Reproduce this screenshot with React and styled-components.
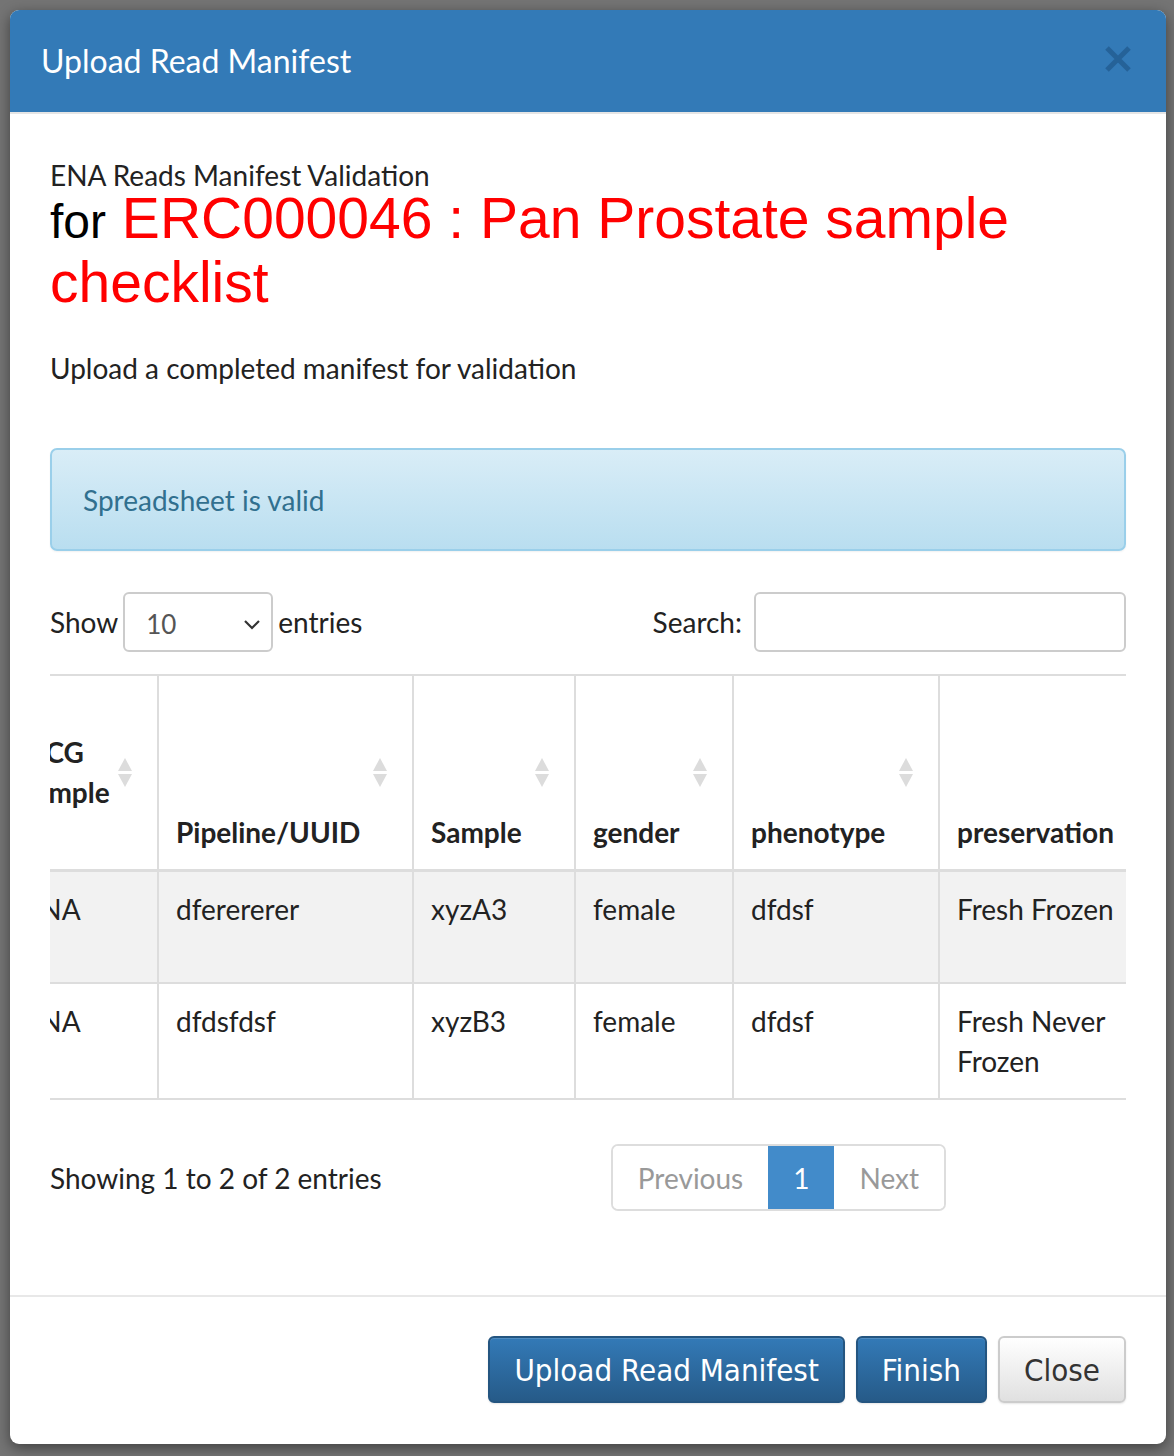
import React from "react";
import styled, { createGlobalStyle } from "styled-components";

const GlobalStyle = createGlobalStyle`
  html, body {
    margin: 0;
    padding: 0;
    background: #747474;
  }
  * {
    box-sizing: border-box;
  }
`;

const Backdrop = styled.div`
  min-height: 1456px;
  padding: 10px 8px 12px 10px;
  font-family: Lato, "Open Sans", sans-serif;
  color: #222;
`;

const Modal = styled.div`
  width: 1156px;
  background: #fff;
  border-radius: 9px;
  overflow: hidden;
  box-shadow: 0 4px 14px rgba(0, 0, 0, 0.45);
`;

const Header = styled.div`
  height: 104px;
  padding: 0 31px;
  background: #337ab7;
  border-bottom: 2px solid #e5e5e5;
  display: flex;
  align-items: center;
  justify-content: space-between;
`;

const Title = styled.h4`
  margin: 0;
  font-size: 32px;
  font-weight: 400;
  color: #fff;
  padding-bottom: 2px;
`;

const CloseX = styled.button`
  border: 0;
  background: none;
  padding: 0;
  width: 28px;
  height: 28px;
  margin-right: 3px;
  margin-bottom: 4px;
  opacity: 0.55;
  display: flex;
`;

const Body = styled.div`
  padding: 44px 40px 0 40px;
  height: 1183px;
  border-bottom: 2px solid #e8e8e8;
`;

const Caption = styled.div`
  font-size: 28px;
  line-height: 34px;
`;

const BigLine = styled.div`
  font-family: "Liberation Sans", Arial, sans-serif;
  font-size: 57px;
  line-height: 64px;
  color: #000;
  margin-top: -6px;
`;

const For = styled.span`
  font-size: 48px;
  line-height: 0;
`;

const Red = styled.span`
  color: #ff0000;
`;

const Lead = styled.p`
  font-size: 28px;
  line-height: 40px;
  margin: 34px 0 0;
`;

const Alert = styled.div`
  margin-top: 60px;
  height: 103px;
  padding: 0 31px;
  display: flex;
  align-items: center;
  font-size: 28px;
  color: #31708f;
  border: 2px solid #9acfea;
  border-radius: 7px;
  background: linear-gradient(to bottom, #d9edf7 0%, #b9def0 100%);
  box-shadow: 0 1px 2px rgba(0, 0, 0, 0.06);
`;

const Controls = styled.div`
  margin-top: 41px;
  display: flex;
  align-items: center;
  justify-content: space-between;
  font-size: 28px;
`;

const ControlGroup = styled.label`
  display: flex;
  align-items: center;
  gap: ${({ $gap }) => $gap}px;
`;

const FakeSelect = styled.div`
  width: 150px;
  height: 60px;
  border: 2px solid #ccc;
  border-radius: 6px;
  padding: 4px 10px 0 21px;
  display: flex;
  align-items: center;
  justify-content: space-between;
  color: #555;
  font-size: 26px;
`;

const SearchInput = styled.div`
  width: 372px;
  height: 60px;
  border: 2px solid #ccc;
  border-radius: 6px;
`;

const ScrollBox = styled.div`
  margin-top: 22px;
  width: 1076px;
  overflow: hidden;
  border-bottom: 2px solid #ddd;
`;

const Table = styled.table`
  margin-left: -48px;
  border-collapse: collapse;
  table-layout: fixed;
  width: 1380px;
  font-size: 28px;
  line-height: 40px;
`;

const Th = styled.th`
  position: relative;
  height: 195px;
  padding: 17px 36px 17px 17px;
  text-align: left;
  vertical-align: bottom;
  font-weight: 700;
  border-top: 2px solid #ddd;
  border-left: 2px solid #ddd;
  border-bottom: 3px solid #ddd;
  &:first-child {
    border-left: 0;
  }
`;

const SortIcon = styled.span`
  position: absolute;
  right: 25px;
  top: 50%;
  margin-top: -14px;
  display: flex;
  flex-direction: column;
  gap: 3px;
  &::before,
  &::after {
    content: "";
    border-left: 7px solid transparent;
    border-right: 7px solid transparent;
  }
  &::before {
    border-bottom: 13px solid #dcdcdc;
  }
  &::after {
    border-top: 13px solid #dcdcdc;
  }
`;

const Tr = styled.tr`
  background: ${({ $striped }) => ($striped ? "#f2f2f2" : "#fff")};
`;

const Td = styled.td`
  height: 113px;
  padding: 17px 17px;
  vertical-align: top;
  font-weight: 400;
  color: #222;
  border-left: 2px solid #ddd;
  border-top: 2px solid #ddd;
  &:first-child {
    border-left: 0;
  }
`;

const Footerbar = styled.div`
  margin-top: 44px;
  display: flex;
  align-items: center;
  justify-content: space-between;
  font-size: 28px;
`;

const Pager = styled.div`
  display: flex;
  height: 67px;
  margin-right: 180px;
  border: 2px solid #ddd;
  border-radius: 7px;
  overflow: hidden;
`;

const PageBtn = styled.div`
  display: flex;
  align-items: center;
  justify-content: center;
  padding: 0 25px;
  font-size: 28px;
  color: ${({ $active }) => ($active ? "#fff" : "#999")};
  background: ${({ $active }) => ($active ? "#428bca" : "#fff")};
  margin: ${({ $active }) => ($active ? "-2px 0" : "0")};
`;

const ModalFooter = styled.div`
  height: 147px;
  padding: 39px 40px 0;
  display: flex;
  justify-content: flex-end;
  gap: 11px;
`;

const Button = styled.button`
  height: 67px;
  padding: 0 24px;
  font-family: "DejaVu Sans Condensed", "DejaVu Sans", sans-serif;
  font-size: 31px;
  border-radius: 6px;
  border: 2px solid ${({ $primary }) => ($primary ? "#245580" : "#ccc")};
  color: ${({ $primary }) => ($primary ? "#fff" : "#333")};
  background: ${({ $primary }) =>
    $primary
      ? "linear-gradient(to bottom, #337ab7 0%, #265a88 100%)"
      : "linear-gradient(to bottom, #fff 0%, #e0e0e0 100%)"};
  box-shadow: inset 0 1px 0 rgba(255, 255, 255, 0.15),
    0 1px 2px rgba(0, 0, 0, 0.1);
`;

const columns = [
  { label: "MCG Sample ID", width: 156 },
  { label: "Pipeline/UUID", width: 255 },
  { label: "Sample", width: 162 },
  { label: "gender", width: 158 },
  { label: "phenotype", width: 206 },
  { label: "preservation", width: 232 },
  { label: "sample type", width: 211 },
];

const rows = [
  ["DNA", "dferererer", "xyzA3", "female", "dfdsf", "Fresh Frozen", "Tumour tissue"],
  ["DNA", "dfdsfdsf", "xyzB3", "female", "dfdsf", "Fresh Never Frozen", "Tumour tissue"],
];

const Chevron = () => (
  <svg width="18" height="12" viewBox="0 0 18 12">
    <path d="M2 3l7 7 7-7" fill="none" stroke="#333" strokeWidth="2.2" />
  </svg>
);

const Times = () => (
  <svg width="28" height="28" viewBox="0 0 28 28">
    <path d="M3 3l22 22M25 3L3 25" stroke="#1a4f80" strokeWidth="5" />
  </svg>
);

export default function App() {
  return (
    <>
      <GlobalStyle />
      <Backdrop>
        <Modal>
          <Header>
            <Title>Upload Read Manifest</Title>
            <CloseX aria-label="close">
              <Times />
            </CloseX>
          </Header>
          <Body>
            <Caption>ENA Reads Manifest Validation</Caption>
            <BigLine>
              <For>for</For> <Red>ERC000046 : Pan Prostate sample checklist</Red>
            </BigLine>
            <Lead>Upload a completed manifest for validation</Lead>
            <Alert>Spreadsheet is valid</Alert>
            <Controls>
              <ControlGroup $gap={5}>
                Show
                <FakeSelect>
                  10
                  <Chevron />
                </FakeSelect>
                entries
              </ControlGroup>
              <ControlGroup $gap={12}>
                Search:
                <SearchInput />
              </ControlGroup>
            </Controls>
            <ScrollBox>
              <Table>
                <colgroup>
                  {columns.map((c) => (
                    <col key={c.label} style={{ width: c.width }} />
                  ))}
                </colgroup>
                <thead>
                  <tr>
                    {columns.map((c) => (
                      <Th key={c.label}>
                        {c.label}
                        <SortIcon />
                      </Th>
                    ))}
                  </tr>
                </thead>
                <tbody>
                  {rows.map((r, i) => (
                    <Tr key={i} $striped={i === 0}>
                      {r.map((v, j) => (
                        <Td key={j}>{v}</Td>
                      ))}
                    </Tr>
                  ))}
                </tbody>
              </Table>
            </ScrollBox>
            <Footerbar>
              <span>Showing 1 to 2 of 2 entries</span>
              <Pager>
                <PageBtn>Previous</PageBtn>
                <PageBtn $active>1</PageBtn>
                <PageBtn>Next</PageBtn>
              </Pager>
            </Footerbar>
          </Body>
          <ModalFooter>
            <Button $primary>Upload Read Manifest</Button>
            <Button $primary>Finish</Button>
            <Button>Close</Button>
          </ModalFooter>
        </Modal>
      </Backdrop>
    </>
  );
}
